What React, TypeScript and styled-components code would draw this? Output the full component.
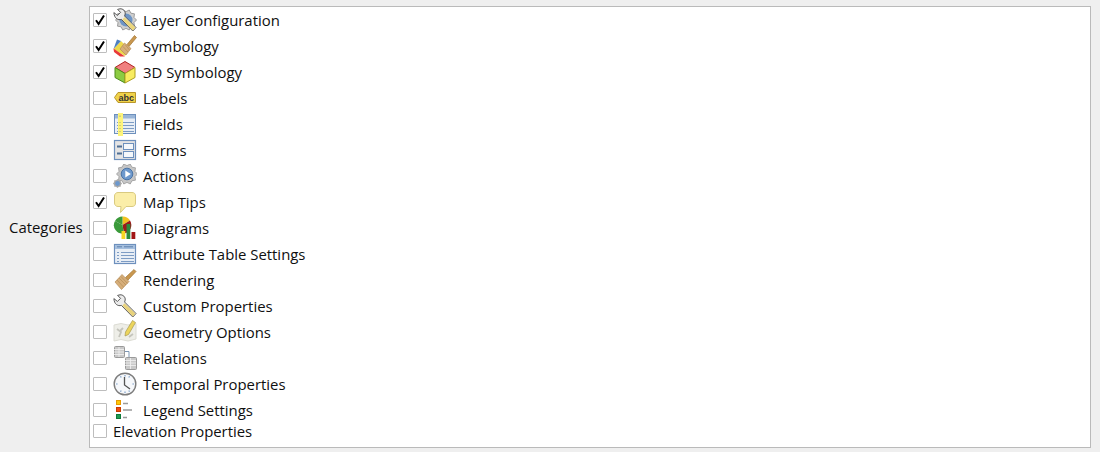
import styled, { createGlobalStyle } from "styled-components";
import type { ReactNode } from "react";

const GlobalStyle = createGlobalStyle`
    html, body {
        margin: 0;
        padding: 0;
        background: #efefef;
    }
`;

const Page = styled.div`
    width: 1100px;
    height: 452px;
    box-sizing: border-box;
    padding: 6px 9px 4px 9px;
    display: flex;
    align-items: stretch;
    gap: 6px;
    background: #efefef;
    color: #101010;
    font-family: "Open Sans", "Noto Sans", sans-serif;
    font-size: 14.9px;
    overflow: hidden;
`;

const Caption = styled.div`
    align-self: center;
    width: 74px;
    flex: none;
    white-space: nowrap;
`;

const ListBox = styled.div`
    flex: 1;
    box-sizing: border-box;
    background: #fff;
    border: 1px solid #bababa;
    display: flex;
    flex-direction: column;
`;

const Row = styled.div<{ $plain?: boolean }>`
    height: ${(p) => (p.$plain ? 16 : 26)}px;
    flex: none;
    display: flex;
    align-items: center;
    padding-left: 3px;
    white-space: nowrap;
`;

const CheckBox = styled.span`
    width: 14px;
    height: 14px;
    flex: none;
    box-sizing: border-box;
    border: 1px solid #bdbdbd;
    border-radius: 1px;
    background: #fff;
    margin-right: 6px;
    display: flex;
    align-items: center;
    justify-content: center;
`;

const IconSlot = styled.span`
    width: 24px;
    height: 24px;
    flex: none;
    margin-right: 6px;
    display: block;

    svg {
        display: block;
    }
`;

const Icon = ({ children }: { children: ReactNode }) => (
    <IconSlot>
        <svg width="24" height="24" viewBox="0 0 24 24">
            {children}
        </svg>
    </IconSlot>
);

const Tick = () => (
    <svg width="12" height="12" viewBox="0 0 12 12">
        <path d="M2 6.2 L4.6 10 L10 1.5" fill="none" stroke="#000" strokeWidth="2" />
    </svg>
);

const gearPath = (cx: number, cy: number, r: number, teeth: number) => {
    let d = "";
    const steps = teeth * 2;
    for (let i = 0; i < steps; i++) {
        const a = (i / steps) * Math.PI * 2;
        const rr = i % 2 === 0 ? r : r * 0.8;
        d += `${i === 0 ? "M" : "L"}${(cx + Math.cos(a) * rr).toFixed(2)} ${(cy + Math.sin(a) * rr).toFixed(2)} `;
    }
    return d + "Z";
};

const Wrench = ({ handle }: { handle: string }) => (
    <>
        <path
            d="M7 0.8 C10 0.6 12.6 3 12.2 6 L11.6 8 L23 19.5 L19.8 23 L8.4 11.4 C5 12.4 1.2 10.4 0.9 4.6 L4.4 7.4 L7.6 4.4 L4.6 1.4 Z"
            fill="#ececec"
            stroke="#4a4a4a"
            strokeWidth="0.9"
        />
        <path d="M11.5 9.2 L22.4 19.6 L19.8 22.4 L9.4 11.6 Z" fill={handle} />
    </>
);

const Brush = () => (
    <>
        <path d="M12.5 9.5 L21 1.5 L23 3.5 L15 12 Z" fill="#c9974f" stroke="#a07430" strokeWidth="0.7" />
        <path d="M9 6.5 L16 13.5 L8.5 21.5 L2 14 Z" fill="#d6ae7a" stroke="#b58d58" strokeWidth="0.7" />
        <path d="M6 10 L13 17 M4 12 L10.5 19 M8 8.5 L14.5 15.5" stroke="#b58d58" strokeWidth="0.7" />
    </>
);

const Table = ({ x, y, w, h }: { x: number; y: number; w: number; h: number }) => (
    <>
        <rect x={x + 0.5} y={y + 0.5} width={w} height={h} rx="1" fill="#c9c9c9" stroke="#9a9a9a" />
        <path
            d={`M${x} ${y + 3.5} H${x + w} M${x} ${y + 6} H${x + w} M${x} ${y + 8.5} H${x + w} M${x + w / 2} ${y + 1} V${y + h}`}
            stroke="#f2f2f2"
            strokeWidth="0.8"
        />
    </>
);

const TableLines = () => (
    <path
        d="M4 10.5 H6 M8 10.5 H21 M4 13.5 H6 M8 13.5 H21 M4 16.5 H6 M8 16.5 H21 M4 19.5 H6 M8 19.5 H21"
        stroke="#7d9cc4"
        strokeWidth="1"
    />
);

const icons: Record<string, ReactNode> = {
    layer: (
        <>
            <path d={gearPath(13, 12, 10.5, 10)} fill="#cfcfcf" stroke="#8a8a8a" strokeWidth="0.8" />
            <circle cx="13" cy="12" r="6.5" fill="#6d95c6" />
            <Wrench handle="#ecd67a" />
        </>
    ),
    symbology: (
        <>
            <path d="M0.5 15 L8 7 L16 15 L12 22 Z" fill="#edd94c" />
            <path d="M0.5 15 L8 7 L4 5.5 Z" fill="#4d7fc0" />
            <path d="M0.5 14.5 L12 22.5 L7 22.5 L1 18 Z" fill="#e83a38" />
            <path d="M14 10.5 L21.5 1.5 L23.5 3.5 L16 12.5 Z" fill="#c9974f" stroke="#a07430" strokeWidth="0.7" />
            <path d="M11.5 9 L18 14.5 L13 21 L7 15 Z" fill="#d6ae7a" stroke="#b58d58" strokeWidth="0.7" />
            <path d="M10 12.5 L15 18 M12.5 11 L16.5 16" stroke="#b58d58" strokeWidth="0.7" />
        </>
    ),
    cube: (
        <>
            <path d="M12 1.5 L22 7.5 L12 13.5 L2 7.5 Z" fill="#f08080" stroke="#b02020" strokeWidth="1" />
            <path d="M2 7.5 L12 13.5 V23 L2 17.5 Z" fill="#8ccb42" stroke="#4c8a1c" strokeWidth="1" />
            <path d="M22 7.5 L12 13.5 V23 L22 17.5 Z" fill="#f8ec60" stroke="#b0a020" strokeWidth="1" />
        </>
    ),
    labels: (
        <>
            <path d="M5 6.5 H22.5 V16.5 H5 L1.5 11.5 Z" fill="#f0d24a" stroke="#b8962a" strokeWidth="1" />
            <text x="5.5" y="14.7" fontFamily="Liberation Sans, sans-serif" fontSize="9" fontWeight="700" fill="#333">
                abc
            </text>
        </>
    ),
    fields: (
        <>
            <rect x="1.5" y="2.5" width="21" height="19" fill="#e8eef5" stroke="#6d90bd" />
            <rect x="2" y="3" width="20" height="3.5" fill="#9ab6d8" />
            <TableLines />
            <rect x="5" y="1" width="5" height="23" fill="#fdf47a" />
            <path d="M7 3.5 V5 M7 10 V11 M7 13 V14 M7 16 V17 M7 19 V20" stroke="#a8a880" />
        </>
    ),
    forms: (
        <>
            <rect x="1.5" y="2.5" width="21" height="19" fill="#e4e4e4" stroke="#6d90bd" strokeWidth="1.2" />
            <path d="M4 8.5 H9 M4 15.5 H9" stroke="#4f6f94" strokeWidth="2" />
            <rect x="10.5" y="5.5" width="10" height="6" fill="#f5f8fb" stroke="#6d90bd" />
            <rect x="10.5" y="13.5" width="10" height="6" fill="#f5f8fb" stroke="#6d90bd" />
        </>
    ),
    actions: (
        <>
            <path d={gearPath(14, 10, 10.5, 10)} fill="#c6c6c6" stroke="#909090" strokeWidth="0.7" />
            <circle cx="14" cy="10" r="5.8" fill="#6d98cc" stroke="#4a74a6" />
            <path d="M12.3 6.6 L17.8 10 L12.3 13.4 Z" fill="#fff" />
            <path d={gearPath(4.5, 19.5, 4.5, 8)} fill="#a8a8a8" />
            <circle cx="4.5" cy="19.5" r="2.4" fill="#6d98cc" />
        </>
    ),
    tips: (
        <path
            d="M5 2.5 H19 C21.5 2.5 22.5 4 22.5 6 V13 C22.5 15.5 21 16.5 19 16.5 H13 L7.5 22.5 L8 16.5 H5 C3 16.5 1.5 15 1.5 13 V6 C1.5 4 3 2.5 5 2.5 Z"
            fill="#fbeea8"
            stroke="#d9ca80"
            strokeWidth="1"
        />
    ),
    diagrams: (
        <>
            <path d="M9.5 0.5 A8.5 8.5 0 0 1 17 4.5 L9.5 9 Z" fill="#f3c21f" />
            <path d="M17 4.5 A8.5 8.5 0 0 1 11 17.5 L9.5 9 Z" fill="#9b1b1b" />
            <path d="M11 17.5 A8.5 8.5 0 0 1 2 5 L9.5 9 Z" fill="#3a9a3a" />
            <path d="M2 5 A8.5 8.5 0 0 1 9.5 0.5 L9.5 9 Z" fill="#3a9a3a" />
            <rect x="8.5" y="15" width="3.8" height="8" fill="#f5d623" />
            <rect x="13.5" y="8" width="3.8" height="15" fill="#2d8a3c" />
            <rect x="18.5" y="16" width="3.8" height="7" fill="#a21616" />
        </>
    ),
    table: (
        <>
            <rect x="1.5" y="2.5" width="21" height="19" fill="#e8eef5" stroke="#6d90bd" strokeWidth="1.2" />
            <rect x="2" y="3" width="20" height="4" fill="#a4bedd" />
            <path d="M4 4.8 H9 M11 4.8 H20" stroke="#5d80ad" />
            <TableLines />
        </>
    ),
    brush: <Brush />,
    wrench: <Wrench handle="#e8d27c" />,
    geometry: (
        <>
            <path d="M1 5 L8 3.5 L15 5 L23 3.5 V19 L15 21 L8 19.5 L1 21 Z" fill="#eeeee8" stroke="#dcdcd4" />
            <path d="M4 9 L8 12 L6 17 M10 8 L7 11 M16 17 L20 14" stroke="#c4c4bc" strokeWidth="1.8" fill="none" />
            <path d="M19.5 0.5 L22.5 2.5 L15.5 14.5 L12 16 L12.5 12 Z" fill="#ecd55c" stroke="#a89a50" strokeWidth="0.7" />
        </>
    ),
    relations: (
        <>
            <path d="M11 5.5 H16 V11" stroke="#7c96b4" fill="none" strokeWidth="1" />
            <Table x={1} y={0} w={10} h={11} />
            <Table x={12} y={11} w={11} h={12} />
        </>
    ),
    clock: (
        <>
            <circle cx="12" cy="12" r="10.8" fill="#f6f8fb" stroke="#7c7c7c" strokeWidth="1.4" />
            <path d="M12 3 V4.6 M12 19.4 V21 M3 12 H4.6 M19.4 12 H21 M7.5 4.2 L8.2 5.6 M16.5 4.2 L15.8 5.6 M7.5 19.8 L8.2 18.4 M16.5 19.8 L15.8 18.4" stroke="#7ea0c8" strokeWidth="1.2" />
            <path d="M11.5 5 V13 L17 17" fill="none" stroke="#555" strokeWidth="1.3" />
        </>
    ),
    legend: (
        <>
            <rect x="3.5" y="2.5" width="4" height="4" fill="#fdc90a" stroke="#e89a00" />
            <rect x="3.5" y="9.5" width="4" height="4" fill="#ef4a12" stroke="#c83a00" />
            <rect x="3.5" y="16.5" width="4" height="4" fill="#1f9c52" stroke="#0e7a3a" />
            <path d="M10 5.5 H15 M10 12 H19 M10 19.5 H14" stroke="#9a9a9a" strokeWidth="1.6" />
        </>
    ),
};

const categories: { label: string; icon?: string; checked?: boolean }[] = [
    { label: "Layer Configuration", icon: "layer", checked: true },
    { label: "Symbology", icon: "symbology", checked: true },
    { label: "3D Symbology", icon: "cube", checked: true },
    { label: "Labels", icon: "labels" },
    { label: "Fields", icon: "fields" },
    { label: "Forms", icon: "forms" },
    { label: "Actions", icon: "actions" },
    { label: "Map Tips", icon: "tips", checked: true },
    { label: "Diagrams", icon: "diagrams" },
    { label: "Attribute Table Settings", icon: "table" },
    { label: "Rendering", icon: "brush" },
    { label: "Custom Properties", icon: "wrench" },
    { label: "Geometry Options", icon: "geometry" },
    { label: "Relations", icon: "relations" },
    { label: "Temporal Properties", icon: "clock" },
    { label: "Legend Settings", icon: "legend" },
    { label: "Elevation Properties" },
];

export default function App() {
    return (
        <Page>
            <GlobalStyle />
            <Caption>Categories</Caption>
            <ListBox>
                {categories.map((c) => (
                    <Row key={c.label} $plain={!c.icon}>
                        <CheckBox>{c.checked && <Tick />}</CheckBox>
                        {c.icon && <Icon>{icons[c.icon]}</Icon>}
                        <span>{c.label}</span>
                    </Row>
                ))}
            </ListBox>
        </Page>
    );
}
